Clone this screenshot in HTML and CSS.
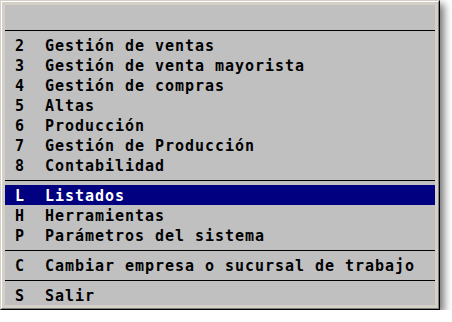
FILE: index.html
```html
<!DOCTYPE html>
<html lang="es">
<head>
    <meta charset="UTF-8">
    <title>Menú principal</title>
    <link rel="stylesheet" href="styles.css">
</head>
<body>

    <div class="window">
        <div class="window-inner">
            <div class="menu">
                <div class="menu-title"></div>
                <div class="sep"></div>

                <div class="item"><span class="key">2</span>Gestión de ventas</div>
                <div class="item"><span class="key">3</span>Gestión de venta mayorista</div>
                <div class="item"><span class="key">4</span>Gestión de compras</div>
                <div class="item"><span class="key">5</span>Altas</div>
                <div class="item"><span class="key">6</span>Producción</div>
                <div class="item"><span class="key">7</span>Gestión de Producción</div>
                <div class="item"><span class="key">8</span>Contabilidad</div>
                <div class="sep"></div>

                <div class="item selected"><span class="key">L</span>Listados</div>
                <div class="item"><span class="key">H</span>Herramientas</div>
                <div class="item"><span class="key">P</span>Parámetros del sistema</div>
                <div class="sep"></div>

                <div class="item"><span class="key">C</span>Cambiar empresa o sucursal de trabajo</div>
                <div class="sep"></div>

                <div class="item"><span class="key">S</span>Salir</div>
            </div>
        </div>
    </div>

</body>
</html>
```

FILE: styles.css
```css
body {
    margin: 0;
    background-color: #ffffff;
    font-family: 'DejaVu Sans Mono', monospace;
}

/* Raised window frame, like the old console dialogs */
.window {
    display: inline-block;
    border: 1px solid;
    border-color: #d4d0c8 #000000 #000000 #d4d0c8;
    box-shadow: 4px 4px 8px rgba(0, 0, 0, 0.55);
}

.window-inner {
    border: 1px solid;
    border-color: #ffffff #808080 #808080 #ffffff;
    background-color: #d4d0c8;
    padding: 3px;
}

.menu {
    width: 430px;
    background-color: #c0c0c0;
    color: #000000;
    font-size: 15px;
    font-weight: bold;
    letter-spacing: 0.97px; /* 10px per character cell */
}

.menu-title {
    height: 20px;
}

.sep {
    height: 1px;
    margin: 5px 0 4px;
    background-color: #000000;
}

.item {
    height: 20px;
    line-height: 22px; /* sits the text a pixel lower in its cell */
    white-space: pre;
    padding-left: 10px;
}

.item.selected {
    background-color: #000080;
    color: #ffffff;
}

.key {
    display: inline-block;
    width: 30px;
}
```
